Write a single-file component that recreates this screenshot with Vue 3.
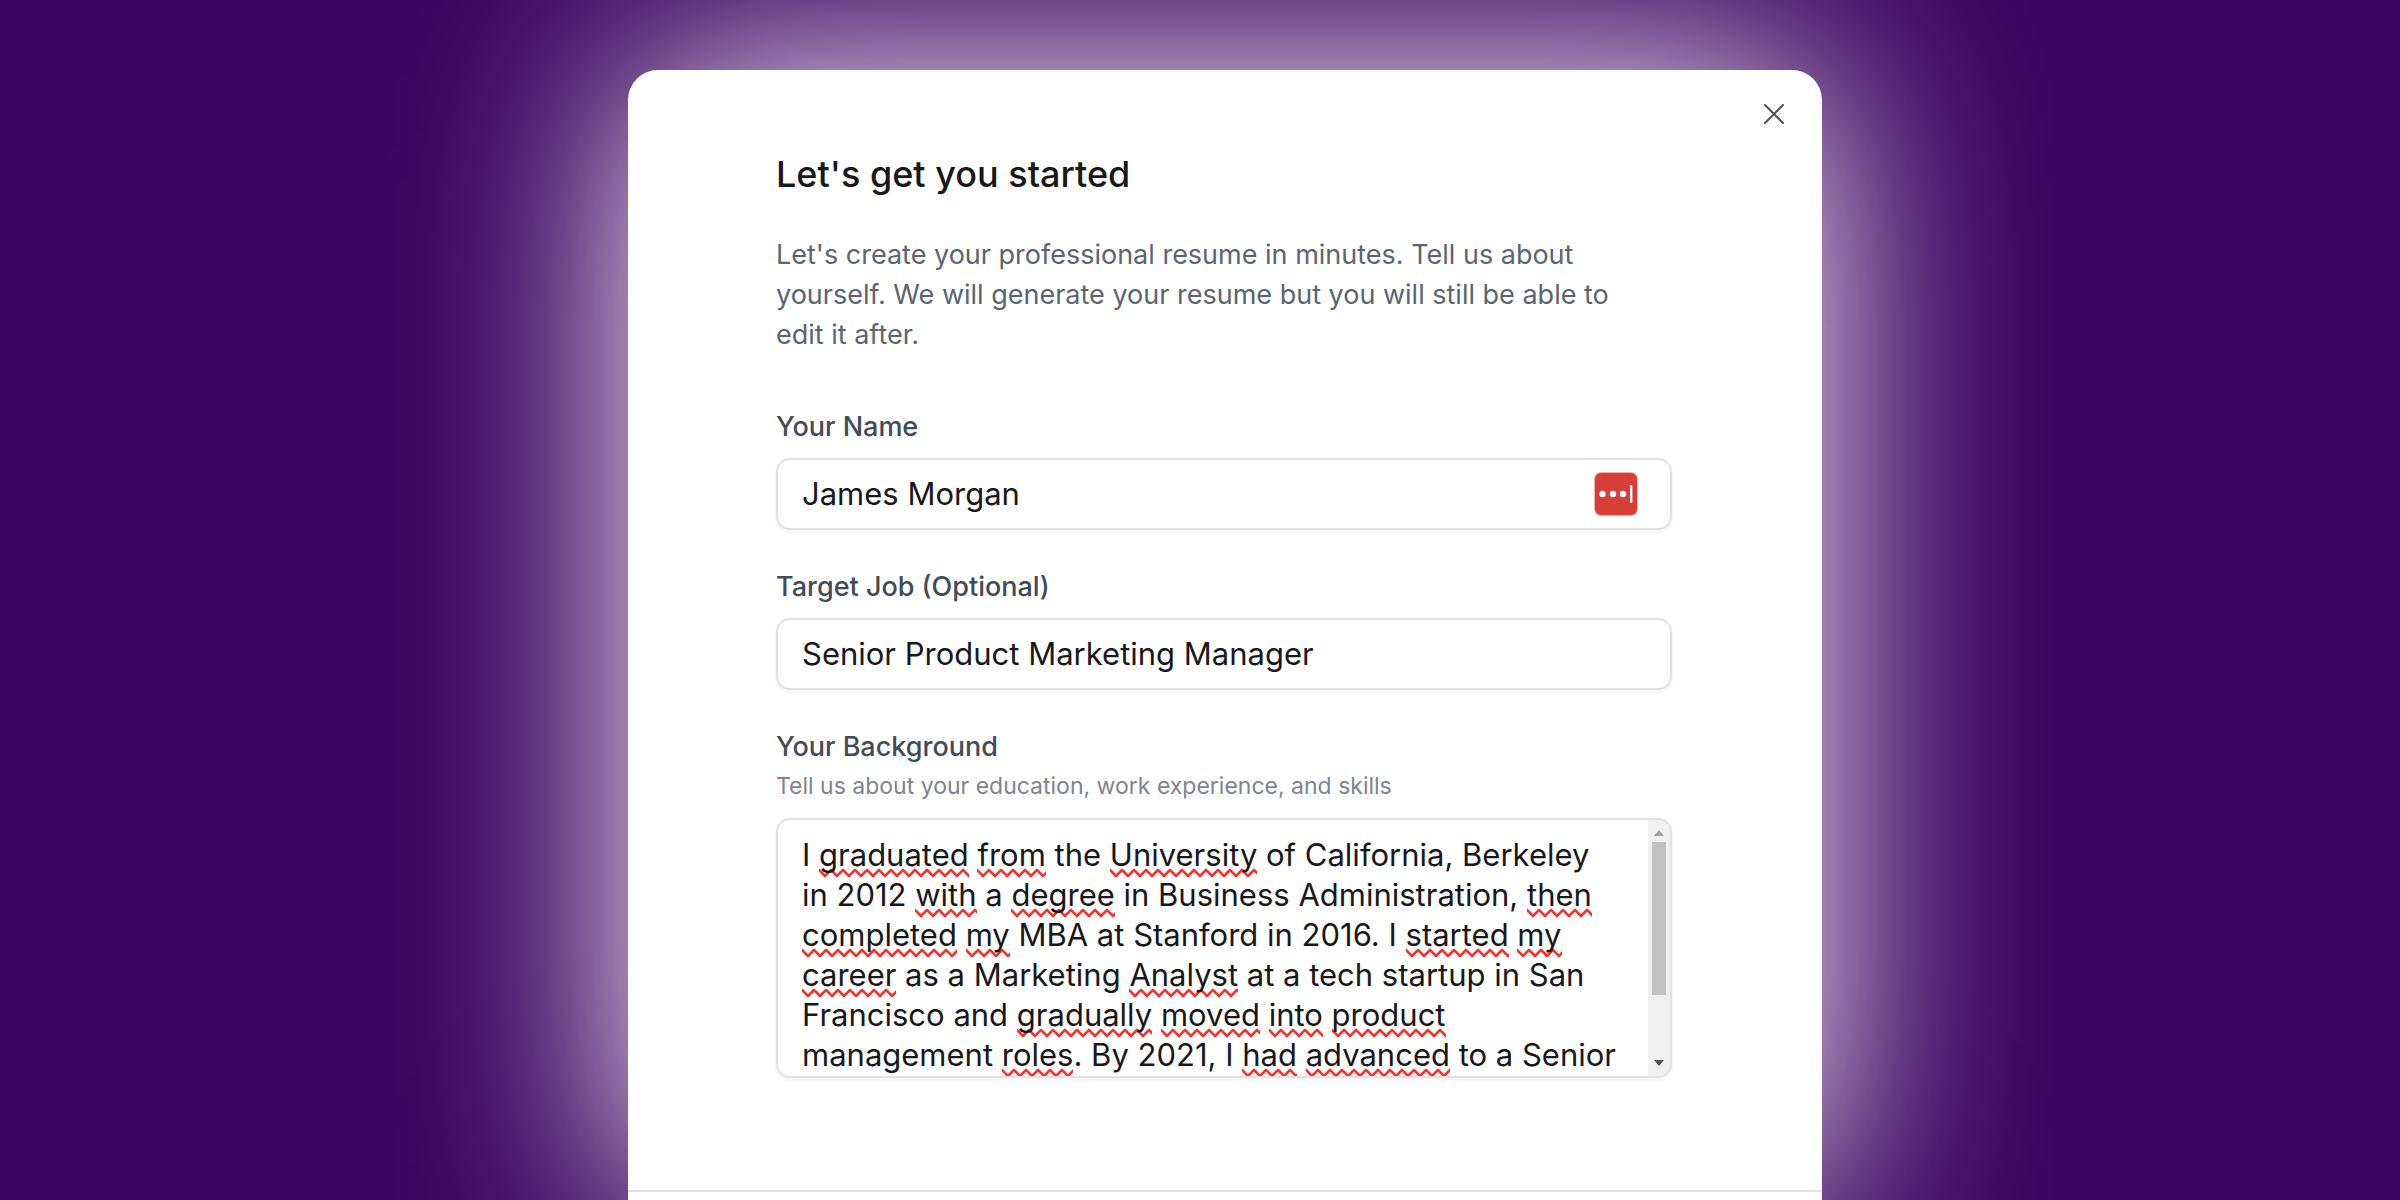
<script setup>
import { ref, computed, onMounted } from 'vue'

const name = ref('James Morgan')
const targetJob = ref('Senior Product Marketing Manager')
const background = ref(
  [
    'I graduated from the University of California, Berkeley',
    'in 2012 with a degree in Business Administration, then',
    'completed my MBA at Stanford in 2016. I started my',
    'career as a Marketing Analyst at a tech startup in San',
    'Francisco and gradually moved into product',
    'management roles. By 2021, I had advanced to a Senior'
  ].join('\n')
)

// Words the spell checker does not recognise
const flagged = [
  'graduated', 'from', 'University', 'with', 'degree', 'then', 'completed',
  'my', 'started', 'career', 'Analyst', 'gradually', 'moved', 'into',
  'product', 'roles', 'had', 'advanced'
]

// Split on word boundaries so each flagged word can be underlined
const tokens = computed(() =>
  background.value.split(/\b/).map((text) => ({
    text,
    flagged: flagged.includes(text)
  }))
)

const area = ref(null)
const marks = ref(null)
const thumbSize = ref(72)
const thumbTop = ref(0)

// Keep the underlines and the scrollbar thumb in step with the text
const syncScroll = () => {
  const { scrollTop, scrollHeight, clientHeight } = area.value
  marks.value.scrollTop = scrollTop
  thumbSize.value = (clientHeight / scrollHeight) * 100
  thumbTop.value = (scrollTop / scrollHeight) * 100
}

const scrollByLine = (direction) => {
  area.value.scrollTop += direction * 40
}

onMounted(syncScroll)
</script>

<template>
  <div class="page">
    <main class="card">
      <button class="close" type="button" aria-label="Close">
        <svg viewBox="0 0 24 24" width="24" height="24" aria-hidden="true">
          <path d="M3 3L21 21M21 3L3 21" />
        </svg>
      </button>

      <form class="form" @submit.prevent>
        <h1 class="title">Let's get you started</h1>
        <p class="intro">
          Let's create your professional resume in minutes. Tell us about
          yourself. We will generate your resume but you will still be able to
          edit it after.
        </p>

        <div class="field">
          <label class="label" for="name">Your Name</label>
          <div class="control">
            <input id="name" v-model="name" class="input" type="text" />
            <button class="vault" type="button" aria-label="Fill from password manager">
              <svg viewBox="0 0 44 44" width="44" height="44" aria-hidden="true">
                <rect width="44" height="44" rx="7" fill="#efb1ad" />
                <rect x="1" y="1" width="42" height="42" rx="6" fill="#d73e37" />
                <circle cx="8.5" cy="22" r="3.2" fill="#fff" />
                <circle cx="19" cy="22" r="3.2" fill="#fff" />
                <circle cx="29" cy="22" r="3.2" fill="#fff" />
                <rect x="36" y="13" width="2.4" height="18" rx="1" fill="#fff" />
              </svg>
            </button>
          </div>
        </div>

        <div class="field">
          <label class="label" for="job">Target Job (Optional)</label>
          <div class="control">
            <input id="job" v-model="targetJob" class="input" type="text" />
          </div>
        </div>

        <div class="field">
          <label class="label" for="background">Your Background</label>
          <p id="background-hint" class="hint">
            Tell us about your education, work experience, and skills
          </p>
          <div class="control control-area">
            <div ref="marks" class="marks" aria-hidden="true">
              <span
                v-for="(token, i) in tokens"
                :key="i"
                :class="{ flagged: token.flagged }"
              >{{ token.text }}</span>
            </div>
            <textarea
              id="background"
              ref="area"
              v-model="background"
              class="textarea"
              spellcheck="false"
              aria-describedby="background-hint"
              @scroll="syncScroll"
            ></textarea>
            <div class="scrollbar">
              <button
                class="arrow arrow-up"
                type="button"
                tabindex="-1"
                aria-label="Scroll up"
                @click="scrollByLine(-1)"
              >
                <svg viewBox="0 0 10 6" width="10" height="6" aria-hidden="true">
                  <path d="M0 6L5 0L10 6Z" />
                </svg>
              </button>
              <div class="track">
                <div
                  class="thumb"
                  :style="{ height: `${thumbSize}%`, marginTop: `${thumbTop}%` }"
                ></div>
              </div>
              <button
                class="arrow arrow-down"
                type="button"
                tabindex="-1"
                aria-label="Scroll down"
                @click="scrollByLine(1)"
              >
                <svg viewBox="0 0 10 6" width="10" height="6" aria-hidden="true">
                  <path d="M0 0L5 6L10 0Z" />
                </svg>
              </button>
            </div>
          </div>
        </div>
      </form>

      <footer class="footer"></footer>
    </main>
  </div>
</template>

<style>
body {
  background: #3c0561;
}
</style>

<style scoped>
.page {
  box-sizing: border-box;
  display: flex;
  justify-content: center;
  min-height: 100vh;
  padding: 70px 0 0 50px;
  overflow: hidden;
  background: #3c0561;
  font-family: Inter, 'Liberation Sans', sans-serif;
  color: #18181b;
}

.card {
  position: relative;
  box-sizing: border-box;
  display: flex;
  flex-direction: column;
  width: 100%;
  max-width: 1194px;
  border-radius: 30px 30px 0 0;
  background: #fff;
  box-shadow: 0 0 220px #fff;
}

.close {
  position: absolute;
  top: 28px;
  right: 32px;
  display: flex;
  padding: 4px;
  border: 0;
  background: none;
  cursor: pointer;
}

.close svg {
  fill: none;
  stroke: #52525b;
  stroke-width: 2;
  stroke-linecap: round;
}

.form {
  display: flex;
  flex-direction: column;
  flex: 1;
  gap: 37px;
  padding: 83px 150px 112px 148px;
}

.title {
  margin: 0;
  font-size: 36px;
  font-weight: 500;
  line-height: 42px;
}

.intro {
  margin: 3px 24px 15px 0;
  font-size: 27px;
  line-height: 40px;
  color: #5b6570;
}

.field {
  display: flex;
  flex-direction: column;
}

.label {
  font-size: 27px;
  font-weight: 500;
  line-height: 40px;
  color: #414b59;
}

.hint {
  margin: 3px 0 5px;
  font-size: 23px;
  line-height: 32px;
  color: #7d8590;
}

.control {
  box-sizing: border-box;
  display: flex;
  align-items: center;
  height: 72px;
  margin-top: 11px;
  border: 2px solid #e2e2e4;
  border-radius: 14px;
  background: #fff;
  box-shadow: 0 2px 4px rgba(24, 24, 60, 0.06);
}

.input {
  flex: 1;
  min-width: 0;
  padding: 0 24px;
  border: 0;
  outline: none;
  background: none;
  font: inherit;
  font-size: 31px;
  line-height: 40px;
  color: inherit;
}

.vault {
  display: flex;
  margin-right: 32px;
  padding: 0;
  border: 0;
  background: none;
  cursor: pointer;
}

.control-area {
  position: relative;
  align-items: stretch;
  height: 260px;
  overflow: hidden;
}

.marks,
.textarea {
  box-sizing: border-box;
  padding: 15px 0 100px 24px;
  font-size: 31px;
  line-height: 40px;
  white-space: pre;
}

.marks {
  position: absolute;
  inset: 0 22px 0 0;
  overflow: hidden;
  color: transparent;
}

.flagged {
  padding-bottom: 5px;
  background: url("data:image/svg+xml,%3Csvg xmlns='http://www.w3.org/2000/svg' width='12' height='10'%3E%3Cpath d='M-6 8L0 2L6 8L12 2L18 8' fill='none' stroke='%23f8302c' stroke-width='2.6' stroke-linejoin='round'/%3E%3C/svg%3E") repeat-x left bottom;
}

.textarea {
  position: relative;
  flex: 1;
  min-width: 0;
  margin: 0;
  border: 0;
  outline: none;
  resize: none;
  overflow-x: hidden;
  overflow-y: scroll;
  scrollbar-width: none;
  background: none;
  font-family: inherit;
  color: inherit;
}

.scrollbar {
  display: flex;
  flex-direction: column;
  width: 22px;
  background: #f0f0f0;
}

.arrow {
  display: flex;
  align-items: center;
  justify-content: center;
  height: 22px;
  padding: 4px 0 0;
  border: 0;
  background: none;
}

.arrow-up {
  fill: #a3a3a3;
}

.arrow-down {
  padding: 0 0 4px;
  fill: #505050;
}

.track {
  flex: 1;
  padding: 0 4px;
}

.thumb {
  background: #c1c1c1;
}

.footer {
  height: 8px;
  border-top: 2px solid #e2e2e4;
}
</style>
